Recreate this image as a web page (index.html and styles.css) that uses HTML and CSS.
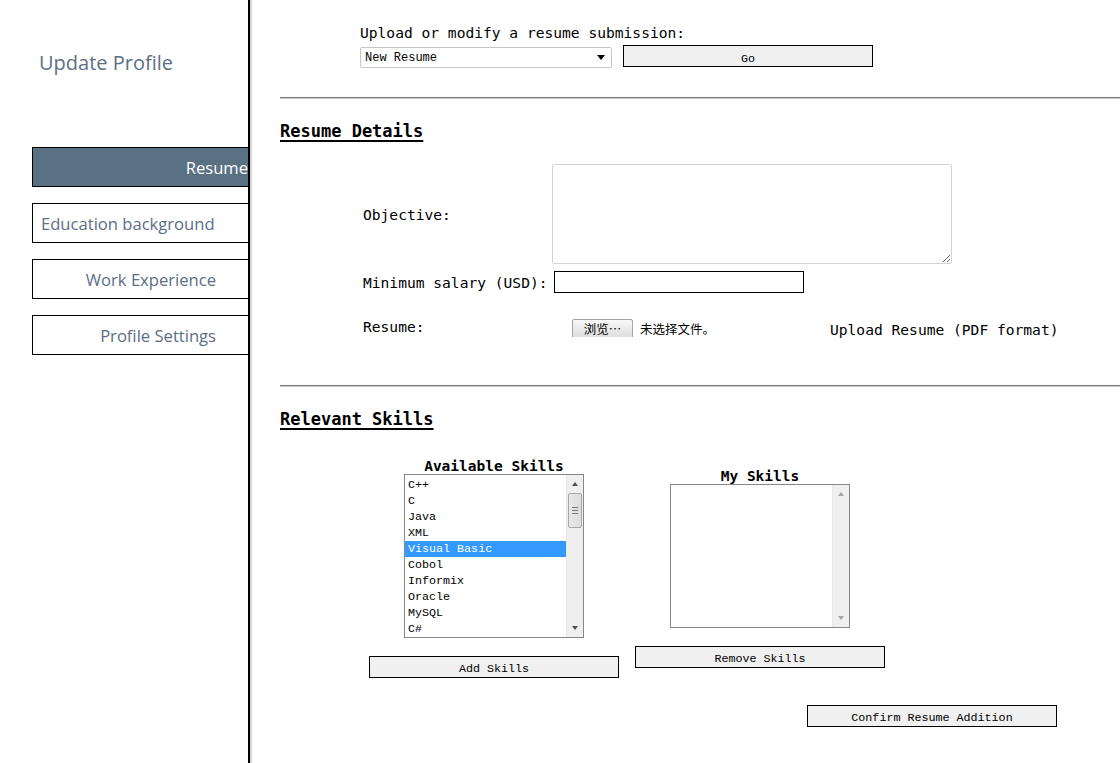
FILE: index.html
```html
<!DOCTYPE html>
<html>
<head>
<meta charset="utf-8">
<title>Update Profile - Resume</title>
<link rel="stylesheet" href="styles.css">
</head>
<body>
<div class="page">
  <aside class="sidebar">
    <h1 class="side-title">Update Profile</h1>
    <nav class="nav">
      <a class="nav-item active align-right">Resume</a>
      <a class="nav-item align-left">Education background</a>
      <a class="nav-item align-right pad-right">Work Experience</a>
      <a class="nav-item align-right pad-right">Profile Settings</a>
    </nav>
  </aside>
  <main class="main">
    <div class="top">
      <div class="top-label">Upload or modify a resume submission:</div>
      <div class="top-row">
        <div class="select"><span>New Resume</span><span class="caret"></span></div>
        <button class="btn btn-go">Go</button>
      </div>
    </div>
    <hr class="rule">
    <h2 class="heading">Resume Details</h2>
    <div class="details">
      <div class="row row-objective">
        <label class="lbl lbl-obj">Objective:</label>
        <textarea class="objective"></textarea>
      </div>
      <div class="row row-salary">
        <label class="lbl">Minimum salary (USD):</label>
        <input class="salary" type="text">
      </div>
      <div class="row row-resume">
        <label class="lbl lbl-resume">Resume:</label>
        <div class="file">
          <span class="file-btn">浏览…</span>
          <span class="file-name">未选择文件。</span>
        </div>
        <span class="upload-note">Upload Resume (PDF format)</span>
      </div>
    </div>
    <hr class="rule rule-2">
    <h2 class="heading">Relevant Skills</h2>
    <div class="skills">
      <div class="skill-col col-available">
        <div class="col-title">Available Skills</div>
        <div class="listbox lb-available">
          <ul class="items">
            <li>C++</li>
            <li>C</li>
            <li>Java</li>
            <li>XML</li>
            <li class="selected">Visual Basic</li>
            <li>Cobol</li>
            <li>Informix</li>
            <li>Oracle</li>
            <li>MySQL</li>
            <li>C#</li>
          </ul>
          <div class="scrollbar">
            <span class="arrow up"></span>
            <div class="track"><div class="thumb"><i></i><i></i><i></i></div></div>
            <span class="arrow down"></span>
          </div>
        </div>
        <button class="btn btn-wide">Add Skills</button>
      </div>
      <div class="skill-col col-mine">
        <div class="col-title">My Skills</div>
        <div class="listbox lb-mine">
          <ul class="items"></ul>
          <div class="scrollbar disabled">
            <span class="arrow up"></span>
            <div class="track"></div>
            <span class="arrow down"></span>
          </div>
        </div>
        <button class="btn btn-wide">Remove Skills</button>
      </div>
    </div>
    <div class="confirm-row">
      <button class="btn btn-wide">Confirm Resume Addition</button>
    </div>
  </main>
</div>
</body>
</html>
```

FILE: styles.css
```css
* { box-sizing: border-box; }
html, body { margin: 0; padding: 0; background: #fff; }
body { width: 1120px; height: 763px; overflow: hidden; }

.page { display: flex; height: 763px; }

.sidebar {
  width: 250px;
  flex: none;
  border-right: 2px solid #000;
  box-shadow: 2px 0 0 #d6d6d6;
  font-family: "Open Sans", "Noto Sans", sans-serif;
}
.side-title {
  margin: 0;
  padding: 49px 0 0 39px;
  font-size: 20px;
  font-weight: 400;
  color: #5b7086;
  line-height: 28px;
  height: 147px;
}
.nav { display: flex; flex-direction: column; gap: 16px; padding-left: 32px; }
.nav-item {
  display: flex;
  align-items: center;
  height: 40px;
  border: 1px solid #000;
  border-right: none;
  font-size: 16.6px;
  color: #5b6e85;
  padding: 1px 0 0 8px;
}
.nav-item.align-right { justify-content: flex-end; }
.nav-item.pad-right { padding-right: 32px; }
.nav-item.active { background: #5a7184; color: #fff; }

.main {
  flex: 1;
  font-family: "DejaVu Sans Mono", "Liberation Mono", monospace;
  font-size: 14.6px;
  color: #000;
}

.top { padding: 24px 0 0 110px; }
.top-label { line-height: 18px; }
.top-row { display: flex; align-items: flex-start; margin-top: 3px; }
.select {
  width: 252px;
  height: 21px;
  margin-top: 2px;
  border: 1px solid #c6c6c6;
  border-radius: 2px;
  display: flex;
  align-items: center;
  justify-content: space-between;
  padding: 0 6px 0 4px;
  font-family: "Liberation Mono", monospace;
  font-size: 12px;
}
.caret {
  width: 0; height: 0;
  border-left: 4px solid transparent;
  border-right: 4px solid transparent;
  border-top: 5px solid #000;
}
.btn {
  height: 22px;
  border: 1px solid #000;
  background: #f0f0f0;
  font-family: "Liberation Mono", monospace;
  font-size: 11.7px;
  color: #000;
  padding: 0;
  border-radius: 0;
  line-height: 20px;
}
.btn-go { width: 250px; margin-left: 11px; padding-top: 3px; }
.btn-wide { width: 250px; padding-top: 2px; }

.rule {
  margin: 29px 0 0 30px;
  border: 0;
  border-top: 1px solid #777;
  border-bottom: 1px solid #c8c8c8;
  height: 0;
}
.rule-2 { margin-top: 46px; }

.heading {
  margin: 22px 0 0 30px;
  font-size: 17px;
  font-weight: 700;
  text-decoration: underline;
  text-decoration-thickness: 2px;
  text-underline-offset: 3px;
  line-height: 20px;
}

.details { padding-left: 113px; margin-top: 23px; }
.row { display: flex; }
.row-objective { align-items: center; }
.lbl { white-space: pre; }
.lbl-obj { width: 189px; }
.objective {
  width: 400px;
  height: 100px;
  border: 1px solid #d3d3d3;
  border-radius: 2px;
  margin: 0;
  resize: both;
  font-family: inherit;
}
.row-salary { margin-top: 7px; align-items: center; }
.salary {
  width: 250px;
  height: 22px;
  margin-left: 6px;
  border: 1px solid #000;
  padding: 0;
}
.row-resume { margin-top: 26px; align-items: flex-start; }
.lbl-resume { width: 209px; line-height: 16px; margin-top: 0; }
.file { display: flex; align-items: flex-start; height: 18px; overflow: hidden; }
.file-btn {
  height: 20px;
  width: 61px;
  border: 1px solid #a5a5a5;
  border-radius: 2px;
  background: linear-gradient(#f7f7f7, #dcdcdc);
  font-family: "Noto Sans CJK SC", sans-serif;
  font-size: 12.5px;
  line-height: 18px;
  text-align: center;
}
.file-name {
  margin-left: 7px;
  font-family: "Noto Sans CJK SC", sans-serif;
  font-size: 12.5px;
  line-height: 20px;
}
.upload-note { margin-left: 115px; margin-top: 2px; line-height: 18px; }

.skills { display: flex; padding-left: 119px; margin-top: 29px; gap: 16px; }
.skill-col { width: 250px; display: flex; flex-direction: column; align-items: center; }
.col-mine { margin-top: 10px; }
.col-title { font-weight: 700; font-size: 14.5px; line-height: 16px; height: 16px; }
.listbox {
  width: 180px;
  border: 1px solid #838890;
  display: flex;
  background: #fff;
  margin-top: 0;
}
.lb-available { height: 164px; }
.lb-mine { height: 144px; }
.items {
  list-style: none;
  margin: 0;
  padding: 2px 0 0 0;
  flex: 1;
  font-family: "Liberation Mono", monospace;
  font-size: 11.7px;
  line-height: 16px;
}
.items li { padding-left: 3px; height: 16px; white-space: nowrap; }
.items li.selected { background: #3399ff; color: #fff; }

.scrollbar {
  width: 17px;
  display: flex;
  flex-direction: column;
  background: #efefef;
  border-left: 1px solid #e6e6e6;
}
.arrow { height: 17px; position: relative; display: block; }
.arrow::after {
  content: "";
  position: absolute;
  left: 5px;
  width: 0; height: 0;
  border-left: 3.5px solid transparent;
  border-right: 3.5px solid transparent;
}
.arrow.up::after { top: 7px; border-bottom: 4px solid #505050; }
.arrow.down::after { top: 6px; border-top: 4px solid #505050; }
.scrollbar.disabled .arrow.up::after { border-bottom-color: #a3a3a3; }
.scrollbar.disabled .arrow.down::after { border-top-color: #a3a3a3; }
.track { flex: 1; padding: 1px 1px 0 1px; }
.thumb {
  height: 35px;
  border: 1px solid #a8a8a8;
  border-radius: 2px;
  background: linear-gradient(90deg, #e8e8e8, #dcdcdc);
  display: flex;
  flex-direction: column;
  justify-content: center;
  align-items: center;
  gap: 2px;
}
.thumb i { display: block; width: 6px; height: 1px; background: #7a7a7a; }

.col-available .btn-wide { margin-top: 18px; }
.col-mine .btn-wide { margin-top: 18px; }

.confirm-row { padding-left: 557px; margin-top: 27px; }
```
